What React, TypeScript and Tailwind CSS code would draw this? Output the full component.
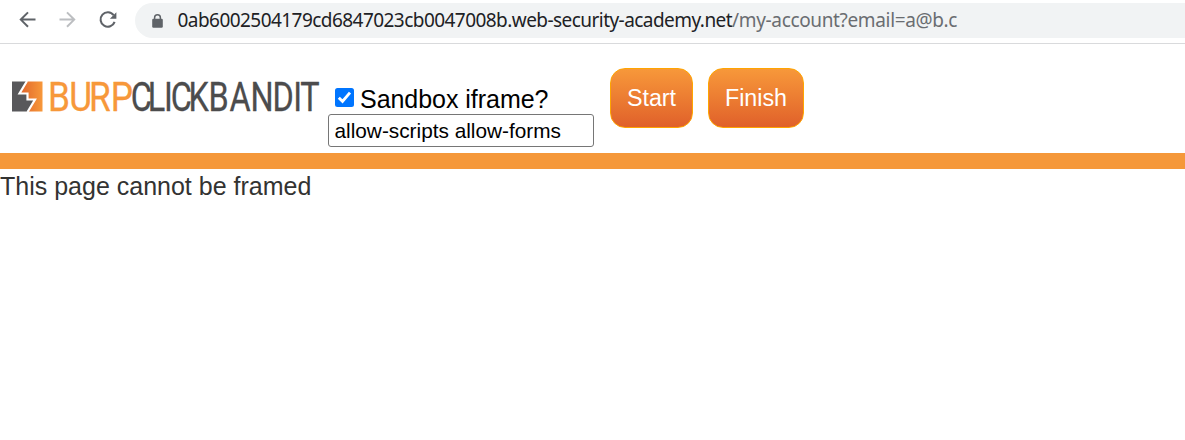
import { useState } from "react";

function BrowserBar() {
  return (
    <div className="flex h-11 items-start border-b border-[#d9dadc] bg-white">
      <svg className="h-[43px] w-[135px] shrink-0" viewBox="0 0 135 43" fill="none">
        <path d="M35.5 19.6H20.8M28 12.4L20.8 19.6L28 26.8" stroke="#5f6368" strokeWidth="2" />
        <path d="M59.5 19.6H74.2M67 12.4L74.2 19.6L67 26.8" stroke="#bcbec1" strokeWidth="2" />
        <path d="M113.6 15.2A7.2 7.2 0 1 0 114.6 21.8" stroke="#5f6368" strokeWidth="2.1" />
        <path d="M116.4 12.3V18.8H109.9Z" fill="#5f6368" />
      </svg>
      <div className="mt-[3px] flex h-[35px] min-w-0 flex-1 items-center rounded-l-full bg-[#f1f3f4] pl-[17px]">
        <svg className="h-[14px] w-[11px] shrink-0" viewBox="0 0 11 14">
          <path d="M2.6 6V3.7a2.9 2.9 0 0 1 5.8 0V6" fill="none" stroke="#5f6368" strokeWidth="1.5" />
          <rect x="0.2" y="4.8" width="10.6" height="9" rx="1.2" fill="#5f6368" />
        </svg>
        <span className="ml-[14.5px] whitespace-nowrap font-['Noto_Sans',sans-serif] text-[19px] tracking-[-0.55px] text-[#202124]">
          0ab6002504179cd6847023cb0047008b.web-security-academy.net
          <span className="tracking-[-0.35px] text-[#6a6d71]">/my-account?email=a@b.c</span>
        </span>
      </div>
    </div>
  );
}

function Logo() {
  return (
    <svg className="h-[50px] w-[328px] shrink-0" viewBox="0 0 328 50">
      <defs>
        <linearGradient id="mark" x1="0" x2="1">
          <stop offset="0" stopColor="#e0642b" />
          <stop offset="1" stopColor="#f7983a" />
        </linearGradient>
      </defs>
      <path d="M12 10.5H27L19.5 22.5H27.5V28.5H35L27.5 40.5H12Z" fill="#58585b" />
      <path d="M27 10.5H42.5V40.5H27.5L35 28.5H27.5V22.5H19.5Z" fill="url(#mark)" />
      <path d="M27 10L19.5 22.5H27.5V28.5H35L27.5 41" fill="none" stroke="#fff" strokeWidth="2.2" />
      <g fontFamily="Roboto, sans-serif" fontSize="40.5" strokeWidth="0.3" strokeLinejoin="round">
        <text
          transform="scale(0.87 1)"
          x="55.3 79.6 102.4 127.4"
          y="40.4"
          fill="#f7983a"
          stroke="#f7983a"
        >
          BURP
        </text>
        <text
          transform="scale(0.8 1)"
          x="163.3 184.8 205 213.3 235.5 260.5 287 313 340.5 366.5 375.3"
          y="40.4"
          fill="#4c4c4d"
          stroke="#4c4c4d"
        >
          CLICKBANDIT
        </text>
      </g>
    </svg>
  );
}

function OrangeButton({ label, width }: { label: string; width: string }) {
  return (
    <button
      type="button"
      className={`h-[60px] shrink-0 rounded-[15px] border border-[#ffa500] bg-linear-to-b from-[#f7983a] to-[#e0602a] text-[23.3px] text-white ${width}`}
    >
      {label}
    </button>
  );
}

export default function App() {
  const [sandbox, setSandbox] = useState(true);
  const [permissions, setPermissions] = useState("allow-scripts allow-forms");

  return (
    <div className="min-h-[440px] overflow-hidden bg-white font-['Liberation_Sans',Arial,sans-serif]">
      <BrowserBar />
      <header className="flex h-[125px] items-start border-b-16 border-[#f5983a]">
        <div className="pt-[27px]">
          <Logo />
        </div>
        <div className="w-[266px] shrink-0 pt-10">
          <label className="flex h-[30px] items-start pl-[7px] text-[25px] leading-[30px] text-black">
            <input
              type="checkbox"
              checked={sandbox}
              onChange={(e) => setSandbox(e.target.checked)}
              className="peer sr-only"
            />
            <svg className="mt-1 mr-[6px] h-[19px] w-[19px]" viewBox="0 0 19 19">
              <rect width="19" height="19" rx="2.5" fill="#0075ff" />
              {sandbox && <path d="M3.8 9.8L7.5 13.4L15 4.6" fill="none" stroke="#fff" strokeWidth="2.9" />}
            </svg>
            <span className="tracking-[-0.04px]">Sandbox iframe?</span>
          </label>
          <input
            value={permissions}
            onChange={(e) => setPermissions(e.target.value)}
            className="block h-[33px] w-full rounded-[3px] border border-[#767676] bg-white px-[5.5px] text-[20.8px] text-black outline-none"
          />
        </div>
        <div className="flex gap-[15px] pt-6 pl-4">
          <OrangeButton label="Start" width="w-[83px]" />
          <OrangeButton label="Finish" width="w-[96px]" />
        </div>
      </header>
      <main className="pt-[3px] text-[25px] leading-[28px] text-[#333332]">This page cannot be framed</main>
    </div>
  );
}
